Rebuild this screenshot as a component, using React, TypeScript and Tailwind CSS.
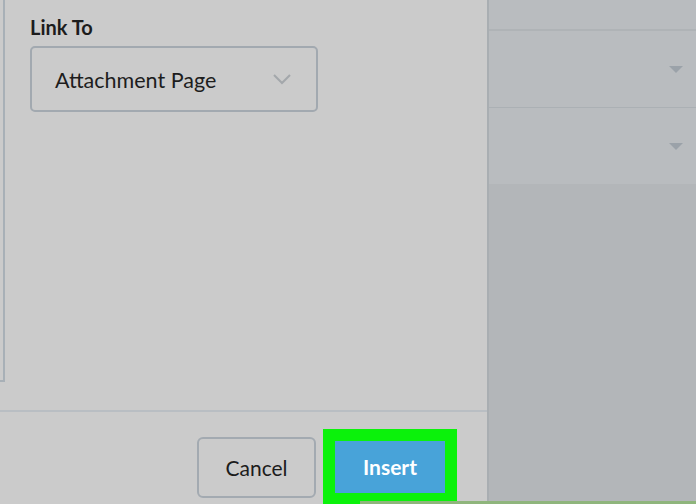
import React from "react";

function Tri() {
  return (
    <svg width="16" height="9" viewBox="0 0 16 9" className="mr-[12px]">
      <path d="M1 1 L15 1 L8 8 Z" fill="#9ba2a9" />
    </svg>
  );
}

export default function App() {
  return (
    <div
      className="relative w-[696px] h-[504px] overflow-hidden flex bg-[#cbcbcb]"
      style={{ fontFamily: "Lato, 'Open Sans', sans-serif" }}
    >
      {/* Left dialog panel */}
      <div className="w-[487px] h-full flex flex-col bg-[#cbcbcb]">
        <div className="h-[412px] shrink-0 flex border-b-2 border-[#b9bec3]">
          <div className="w-[5px] h-[382px] border-r-2 border-b-2 border-[#a8b0b7] shrink-0" />
          <div className="pl-[25px] pt-[15px] flex flex-col">
            <div className="text-[20px] font-bold text-[#1c1c1c] leading-[24px]">Link To</div>
            <div className="mt-[7px] w-[288px] h-[66px] rounded-[5px] border-2 border-[#a2a9b0] flex items-center justify-between pl-[23px] pr-[24px]">
              <span className="text-[21.5px] text-[#1d1d1d] mt-[2px]">Attachment Page</span>
              <svg width="20" height="12" viewBox="0 0 20 12">
                <path d="M2 2 L10 10 L18 2" fill="none" stroke="#a3a7ab" strokeWidth="2" />
              </svg>
            </div>
          </div>
        </div>
        <div className="flex-1 flex justify-end items-start pr-[30px] pt-[17px] gap-[7px]">
          <div className="mt-[8px] w-[119px] h-[61px] rounded-[6px] border-2 border-[#a3aab1] flex items-center justify-center text-[21px] text-[#1c1c1c] shrink-0">
            Cancel
          </div>
          <div className="w-[134px] h-[90px] shrink-0 bg-[#0bf20b] pt-[12px] px-[12px]">
            <div className="w-[110px] h-[52px] bg-[#48a3d9] flex items-center justify-center text-[21px] font-bold text-white">
              Insert
            </div>
          </div>
        </div>
      </div>
      {/* Right background panel */}
      <div className="flex-1 h-full flex flex-col bg-[#b3b6b9] border-l-2 border-[#a9aeb2]">
        <div className="h-[31px] bg-[#b9bcbf] border-b-2 border-[#afb3b6]" />
        <div className="h-[77px] bg-[#b9bcbf] border-b border-[#abb0b4] flex items-center justify-end">
          <Tri />
        </div>
        <div className="h-[76px] bg-[#b9bcbf] flex items-center justify-end">
          <Tri />
        </div>
      </div>
      <div className="absolute left-[360px] right-0 bottom-0 h-[3px] bg-[#8fb57c]" />
    </div>
  );
}
